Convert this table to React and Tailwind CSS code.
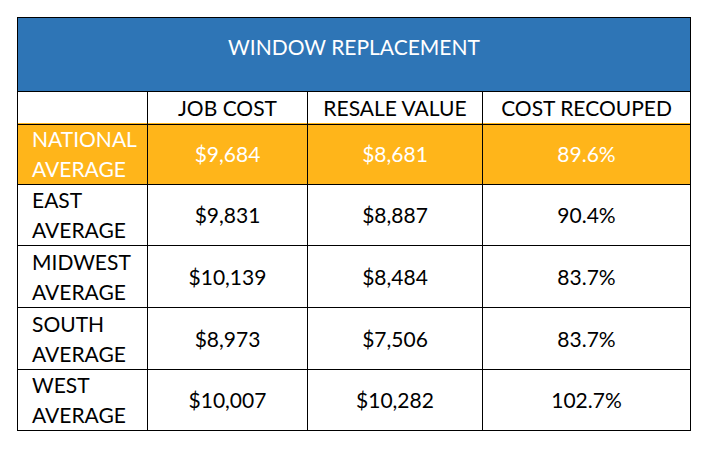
const rows = [
  { region: "NATIONAL", job: "$9,684", resale: "$8,681", pct: "89.6%", highlight: true, h: "h-[62px]" },
  { region: "EAST", job: "$9,831", resale: "$8,887", pct: "90.4%", h: "h-[61px]" },
  { region: "MIDWEST", job: "$10,139", resale: "$8,484", pct: "83.7%", h: "h-[62px]" },
  { region: "SOUTH", job: "$8,973", resale: "$7,506", pct: "83.7%", h: "h-[62px]" },
  { region: "WEST", job: "$10,007", resale: "$10,282", pct: "102.7%", h: "h-[61px]" },
];

const cell = "border-r border-b border-black flex items-center justify-center";

export default function App() {
  return (
    <div className="w-[712px] h-[452px] bg-white pt-[17px] pl-[17px] font-['Lato','Liberation_Sans',sans-serif] text-[21px] text-black">
      <div className="w-[674px] border-l border-t border-black">
        <div className="h-[74px] bg-[#2e75b6] border-r border-b border-black flex items-center justify-center text-white pb-[16px]">
          WINDOW REPLACEMENT
        </div>
        <div className="grid grid-cols-[130px_160px_175px_208px] h-[31px]">
          <div className={cell}></div>
          <div className={cell}>JOB COST</div>
          <div className={cell}>RESALE VALUE</div>
          <div className={cell}>COST RECOUPED</div>
        </div>
        {rows.map((r) => (
          <div
            key={r.region}
            className={
              "grid grid-cols-[130px_160px_175px_208px] " +
              r.h +
              (r.highlight ? " bg-[#ffb51a] text-white" : "")
            }
          >
            <div className="border-r border-b border-black flex flex-col justify-center pl-[14px] leading-[30px]">
              <span>{r.region}</span>
              <span>AVERAGE</span>
            </div>
            <div className={cell}>{r.job}</div>
            <div className={cell}>{r.resale}</div>
            <div className={cell}>{r.pct}</div>
          </div>
        ))}
      </div>
    </div>
  );
}
